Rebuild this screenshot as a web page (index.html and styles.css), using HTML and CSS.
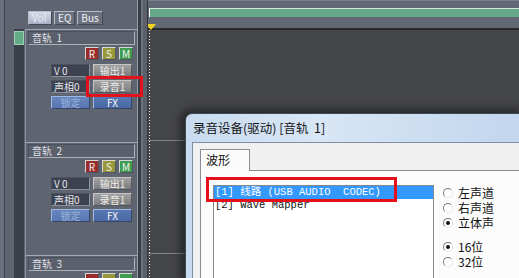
FILE: index.html
```html
<!DOCTYPE html>
<html lang="zh-CN">
<head>
  <meta charset="UTF-8" />
  <title>录音设备</title>
  <link rel="stylesheet" href="styles.css">
</head>
<body>
  <div class="app">
    <aside class="tracks">
      <div class="view-tabs">
        <span class="view-tab active">Vol</span>
        <span class="view-tab">EQ</span>
        <span class="view-tab">Bus</span>
      </div>

      <div class="track selected">
        <div class="track-color"><div class="track-tag"></div></div>
        <div class="track-box">
          <div class="track-name">音轨&nbsp; 1</div>
          <div class="rsm">
            <span class="btn-r">R</span><span class="btn-s">S</span><span class="btn-m">M</span>
          </div>
          <div class="track-row"><span class="field">V 0</span><span class="gbtn">输出1</span></div>
          <div class="track-row"><span class="field">声相0</span><span class="gbtn">录音1</span></div>
          <div class="track-row"><span class="bbtn dim">锁定</span><span class="bbtn">FX</span></div>
        </div>
      </div>

      <div class="track">
        <div class="track-color"></div>
        <div class="track-box">
          <div class="track-name">音轨&nbsp; 2</div>
          <div class="rsm">
            <span class="btn-r">R</span><span class="btn-s">S</span><span class="btn-m">M</span>
          </div>
          <div class="track-row"><span class="field">V 0</span><span class="gbtn">输出1</span></div>
          <div class="track-row"><span class="field">声相0</span><span class="gbtn">录音1</span></div>
          <div class="track-row"><span class="bbtn dim">锁定</span><span class="bbtn">FX</span></div>
        </div>
      </div>

      <div class="track">
        <div class="track-color"></div>
        <div class="track-box">
          <div class="track-name">音轨&nbsp; 3</div>
          <div class="rsm">
            <span class="btn-r"></span><span class="btn-s"></span><span class="btn-m"></span>
          </div>
        </div>
      </div>
    </aside>

    <div class="splitter"></div>

    <main class="timeline">
      <div class="ruler"><div class="ruler-bar"></div></div>
      <div class="lane first"></div>
      <div class="lane"></div>
      <div class="lane"></div>
      <div class="cursor">
        <svg class="cursor-head" width="10" height="6" viewBox="0 0 10 6">
          <polygon points="0,0 10,0 5,6" fill="#f2d21e" />
        </svg>
        <div class="cursor-line"></div>
      </div>
    </main>
  </div>

  <div class="dialog">
    <div class="dialog-title">录音设备(驱动) [音轨&nbsp; 1]</div>
    <div class="dialog-client">
      <div class="tab-strip"><span class="tab">波形</span></div>
      <div class="tab-pane">
        <div class="device-list">
          <div class="device selected">[1] 线路 (USB AUDIO&nbsp; CODEC)</div>
          <div class="device">[2] Wave Mapper</div>
        </div>
        <div class="options">
          <label class="radio"><span class="dot"></span>左声道</label>
          <label class="radio"><span class="dot"></span>右声道</label>
          <label class="radio"><span class="dot on"></span>立体声</label>
          <div class="radio-gap"></div>
          <label class="radio"><span class="dot on"></span>16位</label>
          <label class="radio"><span class="dot"></span>32位</label>
        </div>
      </div>
    </div>
  </div>

  <!-- 红框标注 -->
  <div class="mark mark-rec"></div>
  <div class="mark mark-device"></div>
</body>
</html>
```

FILE: styles.css
```css
* {
  margin: 0;
  padding: 0;
  box-sizing: border-box;
}

body {
  width: 519px;
  height: 278px;
  overflow: hidden;
  position: relative;
  background: #45464a;
  font-family: "Noto Sans CJK SC", "Liberation Sans", sans-serif;
}

.app {
  display: flex;
  height: 278px;
  overflow: hidden;
}

/* 左侧音轨面板 */
.tracks {
  width: 137px;
  height: 278px;
  overflow: hidden;
  flex-shrink: 0;
  background: #5e6470;
  border-left: 4px solid #697080;
  box-shadow: inset 1px 0 0 #3c4048;
  padding-left: 10px;
}

.view-tabs {
  display: flex;
  gap: 2px;
  padding: 11px 0 0 14px;
  height: 29px;
}

.view-tab {
  height: 14px;
  padding: 0 3px;
  font-size: 10px;
  line-height: 12px;
  color: #f0f2f6;
  background: #6c7280;
  border: 1px solid #b8bcc6;
  border-right-color: #454a55;
  border-bottom-color: #454a55;
}

.view-tab.active {
  color: #e8ecf8;
  background: linear-gradient(#d8dcea, #a8aec4);
  width: 24px;
}

.track {
  display: flex;
  height: 113px;
}

.track-color {
  width: 10px;
  margin-right: 1px;
  background: #3b3f47;
  padding-top: 2px;
}

.track-tag {
  height: 14px;
  background: #62ad86;
  border: 1px solid #9ed0b6;
}

.track-box {
  flex: 1;
  border-top: 1px solid #a4aab4;
  border-left: 1px solid #8c93a0;
  padding: 1px 2px 0 2px;
}

.track-name {
  height: 14px;
  font-size: 10px;
  line-height: 12px;
  padding-left: 3px;
  color: #e2e5ea;
  background: #5a606c;
  border: 1px solid #acb1ba;
  border-top-color: #4a505a;
  border-left-color: #4a505a;
}

.rsm {
  display: flex;
  justify-content: flex-end;
  gap: 3px;
  margin-top: 2px;
  padding-right: 2px;
}

.rsm span {
  width: 14px;
  height: 13px;
  font-size: 10px;
  line-height: 11px;
  text-align: center;
  color: #f4f4f4;
  border: 1px solid #d8d8d8;
  border-right-color: #50545c;
  border-bottom-color: #50545c;
}

.btn-r { background: #9c2c2c; }
.btn-s { background: #99983a; }
.btn-m { background: #3e9d4e; }

.track-row {
  display: flex;
  justify-content: flex-end;
  gap: 3px;
  margin-top: 3px;
  padding-right: 3px;
}

.rsm + .track-row {
  margin-top: 4px;
}

.track-row span {
  width: 39px;
  height: 13px;
  font-size: 10px;
  line-height: 11px;
}

.field {
  padding-left: 2px;
  color: #e4e6ea;
  background: #3d4150;
  border: 1px solid #4a505c;
  border-right-color: #8a909c;
  border-bottom-color: #8a909c;
}

.gbtn {
  text-align: center;
  color: #eeeeee;
  background: linear-gradient(#a2a2a2, #7c7c7c);
  border: 1px solid #c6c6c6;
  border-right-color: #55585e;
  border-bottom-color: #55585e;
}

.bbtn {
  text-align: center;
  color: #f4f6fa;
  background: linear-gradient(#5878b2, #4968a4);
  border: 1px solid #9fb8e2;
  border-right-color: #35466a;
  border-bottom-color: #35466a;
}

.bbtn.dim {
  color: #9db4dc;
  background: linear-gradient(#6886be, #5876b0);
}

.splitter {
  width: 11px;
  flex-shrink: 0;
  background: linear-gradient(90deg,
    #939aa6 0, #939aa6 1px,
    #3a3e46 1px, #3a3e46 4px,
    #6c727c 4px, #6c727c 6px,
    #5a606a 6px, #5a606a 10px,
    #34373d 10px);
}

/* 时间线 */
.timeline {
  flex: 1;
  position: relative;
  height: 278px;
  overflow: hidden;
}

.ruler {
  height: 30px;
  background: #636875;
  border-top: 1px solid #7a808c;
  border-bottom: 2px solid #26282c;
  padding: 7px 0 0 1px;
}

.ruler-bar {
  height: 9px;
  background: #66a88a;
  border-top: 1px solid #d4e4dc;
  border-left: 1px solid #ffffff;
}

.lane {
  height: 113px;
  border-bottom: 1px solid #84868c;
  background: #45464a;
}

.lane.first {
  height: 111px;
}

.cursor {
  position: absolute;
  left: -2px;
  top: 24px;
  width: 10px;
  height: 254px;
}

.cursor-head {
  display: block;
}

.cursor-line {
  margin-left: 3px;
  width: 1px;
  height: 248px;
  background: repeating-linear-gradient(#f4f0d8 0, #f4f0d8 1px, transparent 1px, transparent 3px);
}

/* 录音设备对话框 */
.dialog {
  position: absolute;
  left: 185px;
  top: 113px;
  width: 334px;
  height: 165px;
  overflow: hidden;
  border: 1px solid #3e4654;
  border-right: none;
  border-bottom: none;
  border-radius: 7px 0 0 0;
  background: linear-gradient(90deg, #c8dbf0, #d8e6f5 40%, #c2d6ee);
  box-shadow: -2px -1px 9px 3px rgba(0, 0, 0, 0.45);
  padding-left: 6px;
}

.dialog-title {
  height: 28px;
  padding: 6px 0 0 1px;
  font-size: 12.5px;
  line-height: 16px;
  color: #141414;
}

.dialog-client {
  height: 137px;
  background: #f0f0f0;
  border: 1px solid #7e8ea6;
  border-right: none;
  border-bottom: none;
  padding: 6px 0 0 7px;
}

.tab-strip {
  display: flex;
  height: 21px;
}

.tab {
  width: 50px;
  height: 22px;
  padding: 2px 0 0 5px;
  font-size: 12px;
  line-height: 16px;
  color: #111;
  background: #fbfbfb;
  border: 1px solid #898c95;
  border-bottom: none;
  position: relative;
  z-index: 1;
}

.tab-pane {
  display: flex;
  height: 109px;
  background: #fcfcfc;
  border: 1px solid #898c95;
  border-right: none;
  border-bottom: none;
  padding: 14px 0 0 12px;
}

.device-list {
  width: 221px;
  height: 94px;
  background: #ffffff;
  border: 1px solid #828790;
  border-bottom: none;
  font-family: "Liberation Mono", "Noto Sans CJK SC", monospace;
  font-size: 10.5px;
}

.device {
  height: 13px;
  line-height: 13px;
  padding-left: 1px;
  color: #101010;
  white-space: pre;
}

.device.selected {
  background: #3399ff;
  color: #ffffff;
}

.options {
  padding: 0 0 0 9px;
}

.radio {
  display: flex;
  align-items: center;
  gap: 5px;
  height: 15px;
  font-size: 12px;
  line-height: 15px;
  color: #101010;
}

.radio-gap {
  height: 9px;
}

.dot {
  width: 10px;
  height: 10px;
  flex-shrink: 0;
  border-radius: 50%;
  background: #ffffff;
  border: 1px solid #e6e6e6;
  border-top-color: #7a7a7a;
  border-left-color: #7a7a7a;
  display: flex;
  align-items: center;
  justify-content: center;
}

.dot.on::after {
  content: "";
  width: 4px;
  height: 4px;
  border-radius: 50%;
  background: #111;
}

/* 标注框 */
.mark {
  position: absolute;
  border: 3px solid #e4101a;
}

.mark-rec {
  left: 86px;
  top: 76px;
  width: 57px;
  height: 21px;
}

.mark-device {
  left: 206px;
  top: 177px;
  width: 191px;
  height: 25px;
}
```
